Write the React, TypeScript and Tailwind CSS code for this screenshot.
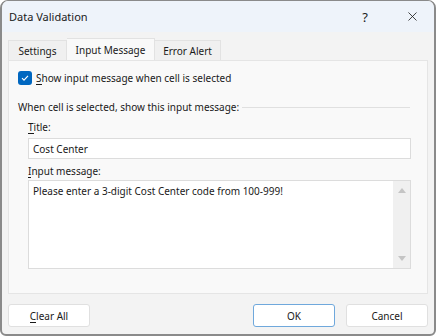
import { X } from "lucide-react"

export default function App() {
    return (
        <div className="w-[436px] h-[336px] bg-[#f3f3f3] text-[10px] leading-[14px] text-[#1a1a1a] font-['Noto_Sans',sans-serif] flex flex-col border-x-2 border-b-2 border-t border-[#8a8a8a] rounded-b-[6px] rounded-t-[8px] overflow-hidden">
            <div className="h-[31px] bg-[#eef3fa] flex items-center shrink-0">
                <span className="pl-[7px] text-[11px]">Data Validation</span>
                <span className="ml-auto mr-[37px] text-[13px]">?</span>
                <X size={15} strokeWidth={1.3} className="mr-[14px]" />
            </div>
            <div className="flex items-end px-[6px] mt-[6px] h-[22px] shrink-0">
                <div className="h-[20px] w-[59px] whitespace-nowrap flex items-center justify-center bg-[#f0f0f0] border border-b-0 border-[#e2e2e2]">Settings</div>
                <div className="h-[22px] w-[88px] whitespace-nowrap flex items-center justify-center bg-[#f9f9f9] border border-b-0 border-l-0 border-[#e2e2e2]">Input Message</div>
                <div className="h-[20px] w-[66px] whitespace-nowrap flex items-center justify-center bg-[#f0f0f0] border border-b-0 border-l-0 border-[#e2e2e2]">Error Alert</div>
            </div>
            <div className="mx-[6px] h-[234px] bg-[#f9f9f9] border border-[#e5e5e5] flex flex-col px-[9px] pt-[10px]">
                <label className="flex items-center gap-[4px] h-[14px]">
                    <span className="w-[14px] h-[14px] rounded-[3px] bg-[#0067c0] flex items-center justify-center">
                        <svg width="10" height="10" viewBox="0 0 10 10" fill="none">
                            <path d="M2 5.2 L4 7.2 L8 2.8" stroke="white" strokeWidth="1.1" />
                        </svg>
                    </span>
                    <span><span className="border-b border-[#1a1a1a] leading-[11px] inline-block">S</span>how input message when cell is selected</span>
                </label>
                <div className="flex items-center mt-[15px] pr-[8px]">
                    <span className="whitespace-nowrap">When cell is selected, show this input message:</span>
                    <div className="flex-1 h-px bg-[#e0e0e0] ml-[3px] mt-[1px]" />
                </div>
                <div className="pl-[10px] pr-[7px] flex flex-col">
                    <span className="mt-[6px]"><span className="border-b border-[#1a1a1a] leading-[11px] inline-block">T</span>itle:</span>
                    <div className="mt-[4px] h-[21px] bg-white border border-[#dcdcdc] flex items-center px-[4px]">Cost Center</div>
                    <span className="mt-[5px]"><span className="border-b border-[#1a1a1a] leading-[11px] inline-block">I</span>nput message:</span>
                    <div className="mt-[2px] h-[89px] bg-white border border-[#dcdcdc] flex">
                        <div className="flex-1 px-[4px] pt-[3px]">Please enter a 3-digit Cost Center code from 100-999!</div>
                        <div className="w-[17px] bg-[#f0f0f0] flex flex-col items-center justify-between py-[7px]">
                            <svg width="8" height="5" viewBox="0 0 8 5"><path d="M0 5 L4 0 L8 5 Z" fill="#c4c4c4" /></svg>
                            <svg width="8" height="5" viewBox="0 0 8 5"><path d="M0 0 L4 5 L8 0 Z" fill="#c4c4c4" /></svg>
                        </div>
                    </div>
                </div>
            </div>
            <div className="flex items-center px-[6px] mt-[10px]">
                <button className="w-[82px] h-[23px] bg-white border border-[#e0e0e0] rounded-[3px]"><span className="border-b border-[#1a1a1a] leading-[11px] inline-block">C</span>lear All</button>
                <button className="ml-auto w-[82px] h-[23px] bg-white border border-[#6fa8dc] rounded-[3px]">OK</button>
                <button className="ml-[11px] w-[82px] h-[23px] bg-white border border-[#e0e0e0] rounded-[3px]">Cancel</button>
            </div>
        </div>
    )
}
